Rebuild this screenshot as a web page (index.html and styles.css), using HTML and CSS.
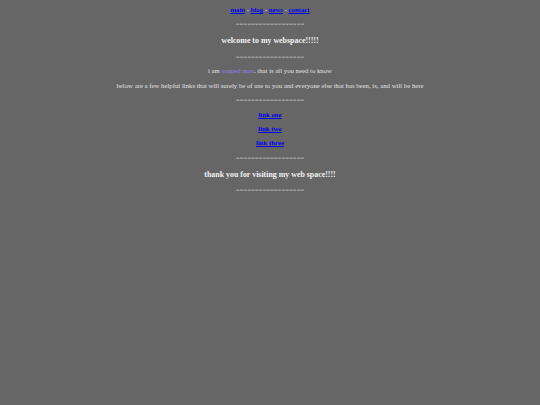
FILE: index.html
```html
<!DOCTYPE html>
<html>
<head>
<meta charset="utf-8">
<link rel="stylesheet" href="styles.css">
</head>
<body class="page">
<div class="wrap">
<p class="nav"><a href="#">main</a> - <a href="#">blog</a> - <a href="#">news</a> - <a href="#">contact</a></p>
<p class="sep">==================</p>
<h3 class="title">welcome to my webspace!!!!!</h3>
<p class="sep">==================</p>
<p class="txt">i am <span class="name">souped man</span>. that is all you need to know</p>
<p class="txt">below are a few helpful links that will surely be of use to you and everyone else that has been, is, and will be here</p>
<p class="sep">==================</p>
<p class="lnk"><a href="#">link one</a></p>
<p class="lnk"><a href="#">link two</a></p>
<p class="lnk"><a href="#">link three</a></p>
<p class="sep">==================</p>
<h3 class="title">thank you for visiting my web space!!!!</h3>
<p class="sep">==================</p>
</div>
</body>
</html>
```
FILE: styles.css
```css
html {
  background: #666666;
}
.page {
  margin: 0;
  background: #666666;
  color: #e2e2e2;
  font-family: "Liberation Serif", "Times New Roman", serif;
  font-size: 6.75px;
}
.wrap {
  text-align: center;
}
.wrap p {
  margin: 6.4px 0;
  line-height: 8px;
}
.wrap .nav {
  margin-top: 6px;
  font-weight: bold;
}
.nav a, .lnk a {
  color: #0000ee;
}
.lnk {
  font-weight: bold;
}
.sep {
  color: #c4c4c4;
}
.title {
  font-size: 7.9px;
  line-height: 9px;
  margin: 7.8px 0;
  color: #f2f2f2;
}
.name {
  color: #9080ea;
}
```
